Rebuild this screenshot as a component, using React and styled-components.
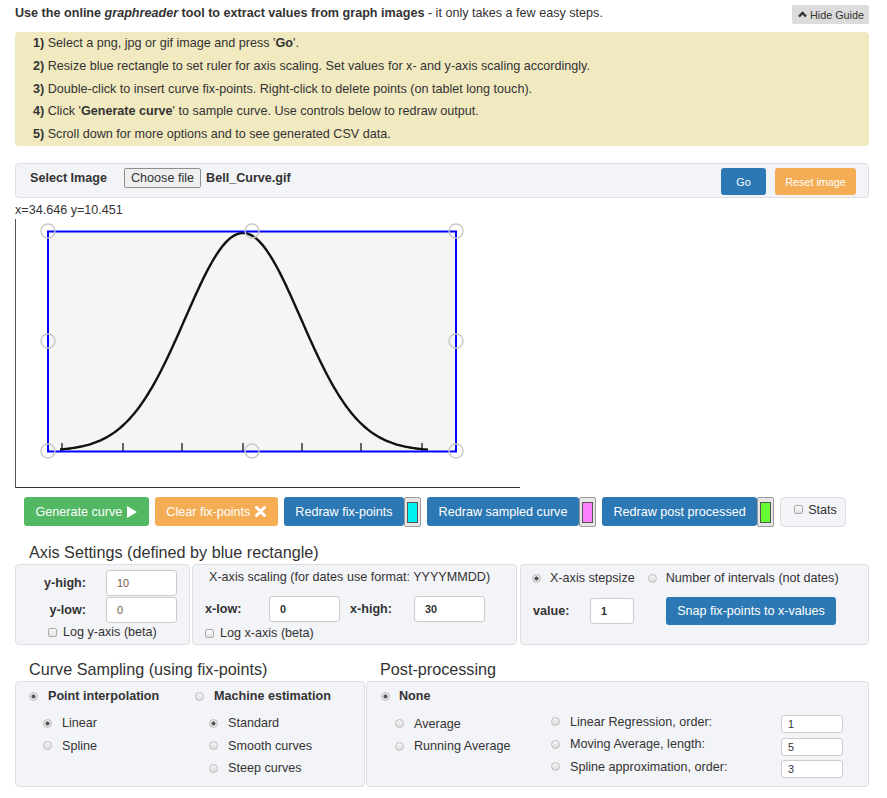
import React from "react";
import styled, { createGlobalStyle } from "styled-components";

const GlobalStyle = createGlobalStyle`
  * { box-sizing: border-box; }
  body {
    margin: 0;
    background: #fff;
    font-family: "Liberation Sans", Arial, sans-serif;
    font-size: 12.6px;
    color: #333;
  }
`;

const COLORS = {
  primary: "#2c78b4",
  success: "#52b863",
  warning: "#f4ad55",
};

const Page = styled.div`
  width: 854px;
  margin-left: 15px;
`;

const Header = styled.div`
  display: flex;
  justify-content: space-between;
  align-items: flex-start;
  height: 28px;
  margin-bottom: 4px;
`;

const Intro = styled.div`
  margin-top: 5px;
  line-height: 16px;
`;

const HideButton = styled.button`
  margin-top: 5px;
  height: 19px;
  padding: 0 5px 0 6px;
  border: none;
  border-radius: 2px;
  background: #dcdcdc;
  color: #333;
  font-family: inherit;
  font-size: 10.8px;
  display: flex;
  align-items: center;
  gap: 3px;
`;

const Guide = styled.div`
  background: #f1e9c0;
  border-radius: 4px;
  padding: 0 0 0 18px;
  height: 114px;
`;

const GuideItem = styled.div`
  line-height: 22.8px;
`;

const Panel = styled.div`
  background: #f3f4f8;
  border: 1px solid #dedfe3;
  border-radius: 4px;
  width: ${(p) => (p.$w ? `${p.$w}px` : "auto")};
`;

const SelectBar = styled(Panel)`
  margin-top: 17px;
  height: 35px;
  display: flex;
  align-items: flex-start;
  justify-content: space-between;
  padding: 4px 12px 0 14px;
`;

const FileGroup = styled.div`
  display: flex;
  align-items: center;
  height: 20px;
`;

const Bold = styled.b`
  font-weight: bold;
`;

const FileLabel = styled.b`
  margin-right: 17px;
`;

const FileButton = styled.span`
  display: inline-flex;
  align-items: center;
  height: 20px;
  padding: 0 6px;
  background: #efefef;
  border: 1px solid #8f8f8f;
  border-radius: 2px;
  margin-right: 5px;
`;

const ButtonGroup = styled.div`
  display: flex;
  gap: 9px;
`;

const Btn = styled.button`
  height: ${(p) => p.$h || 29}px;
  width: ${(p) => (p.$w ? `${p.$w}px` : "auto")};
  padding: 0 ${(p) => (p.$px != null ? p.$px : 11.5)}px;
  border: none;
  border-radius: 3px;
  background: ${(p) => COLORS[p.$variant || "primary"]};
  color: #fff;
  font-family: inherit;
  font-size: ${(p) => p.$fs || 12.6}px;
  display: inline-flex;
  align-items: center;
  justify-content: center;
  gap: 5px;
  flex-shrink: 0;
`;

const Coords = styled.div`
  margin-top: 4px;
  line-height: 17px;
`;

const CanvasFrame = styled.div`
  width: 505px;
  height: 269px;
  border-left: 1px solid #555;
  border-bottom: 1px solid #333;
`;

const ToolRow = styled.div`
  display: flex;
  align-items: flex-start;
  gap: 6px;
  margin-top: 9px;
  padding-left: 9px;
`;

const Pair = styled.div`
  display: flex;
`;

const Swatch = styled.span`
  width: 17px;
  height: 30px;
  background: #e6e6e6;
  border: 1px solid #9a9a9a;
  border-radius: 2px;
  display: flex;
  align-items: center;
  justify-content: center;
`;

const SwatchFill = styled.span`
  width: 11px;
  height: 21px;
  border: 1px solid #555;
  background: ${(p) => p.$color};
`;

const StatsBox = styled(Panel)`
  width: 66px;
  height: 30px;
  display: flex;
  align-items: flex-start;
  gap: 5px;
  padding: 4px 0 0 13px;
  line-height: 16px;
`;

const Check = styled.span`
  display: inline-block;
  width: 9px;
  height: 9px;
  border: 1px solid #aaa;
  border-radius: 2px;
  background: linear-gradient(#fafafa, #e2e2e2);
  flex-shrink: 0;
  margin-top: ${(p) => p.$mt || 0}px;
`;

const Radio = styled.span`
  display: inline-block;
  width: 9px;
  height: 9px;
  border-radius: 50%;
  border: 1px solid #bcbcbc;
  background: ${(p) =>
    p.$checked
      ? "radial-gradient(circle, #555 0 1.8px, #e9e9e9 2.3px)"
      : "linear-gradient(#f6f6f6, #dcdcdc)"};
  flex-shrink: 0;
  margin-right: ${(p) => (p.$mr != null ? p.$mr : 10)}px;
`;

const SectionTitle = styled.h3`
  margin: 0;
  font-size: 16.2px;
  font-weight: normal;
  line-height: 20px;
  padding-left: 14px;
  width: ${(p) => (p.$w ? `${p.$w}px` : "auto")};
`;

const SectionHead = styled.div`
  display: flex;
  margin-top: ${(p) => p.$mt}px;
  margin-bottom: 2px;
`;

const PanelRow = styled.div`
  display: flex;
  gap: ${(p) => p.$gap || 0}px;
`;

const Field = styled.input`
  width: ${(p) => p.$w}px;
  height: ${(p) => p.$h || 26}px;
  border: 1px solid #ccc;
  border-radius: 3px;
  background: #fff;
  padding: 0 ${(p) => (p.$h && p.$h < 20 ? 6 : 10)}px;
  font-family: inherit;
  font-size: 10.8px;
  font-weight: ${(p) => (p.$bold ? "bold" : "normal")};
  color: ${(p) => p.$color || "#333"};
  margin-top: ${(p) => p.$mt || 0}px;
  outline: none;
`;

const YPanel = styled(Panel)`
  height: 81px;
  padding-top: 5px;
`;

const YGrid = styled.div`
  display: grid;
  grid-template-columns: 70px 71px;
  column-gap: 20px;
  row-gap: 1px;
  align-items: center;
`;

const RightLabel = styled.b`
  text-align: right;
`;

const CheckRow = styled.div`
  display: flex;
  align-items: center;
  gap: 6px;
  height: ${(p) => p.$h || 20}px;
  padding-left: ${(p) => p.$pl}px;
  margin-top: ${(p) => p.$mt || 0}px;
`;

const XPanel = styled(Panel)`
  height: 81px;
  padding: 4px 0 0 12px;
`;

const XTitle = styled.div`
  line-height: 16px;
  padding-left: 4px;
`;

const FieldRow = styled.div`
  display: flex;
  align-items: center;
  margin-top: ${(p) => p.$mt || 0}px;
`;

const FieldLabel = styled.b`
  width: ${(p) => p.$w}px;
  flex-shrink: 0;
  padding-left: ${(p) => p.$pl || 0}px;
`;

const StepPanel = styled(Panel)`
  height: 81px;
  padding: 5px 0 0 11px;
`;

const RadioRow = styled.div`
  display: flex;
  align-items: center;
  height: ${(p) => p.$h || 18}px;
  padding-left: ${(p) => p.$pl || 0}px;
  margin-top: ${(p) => p.$mt || 0}px;
`;

const Spacer = styled.span`
  width: ${(p) => p.$w}px;
  flex-shrink: 0;
`;

const SamplingPanel = styled(Panel)`
  height: 106px;
  padding: 5px 0 0 13px;
  display: flex;
`;

const Column = styled.div`
  width: ${(p) => (p.$w ? `${p.$w}px` : "auto")};
  flex-shrink: 0;
`;

const PostPanel = styled(Panel)`
  height: 106px;
  padding: 5px 0 0 14px;
`;

const PostCols = styled.div`
  display: flex;
  margin-top: 7.5px;
`;

const ParamRow = styled.div`
  display: flex;
  justify-content: space-between;
  align-items: flex-start;
  height: 22.5px;
  width: 292px;
`;

const ParamLabel = styled.span`
  display: flex;
  align-items: center;
  line-height: 16px;
  padding-top: 1px;
`;

function bellPath() {
  const pts = [];
  for (let x = 44; x <= 412; x += 2) {
    const d = x - 227;
    const y = 232 - 218 * Math.exp(-(d * d) / (2 * 58 * 58));
    pts.push(`${x},${y.toFixed(2)}`);
  }
  return "M" + pts.join(" L");
}

const HANDLES = [
  [32, 12], [236, 12], [440, 12],
  [32, 122], [440, 122],
  [32, 232], [236, 232], [440, 232],
];
const TICKS = [46, 107, 166, 227, 286, 345, 406];

const GraphImage = () => (
  <svg width="504" height="268" viewBox="0 0 504 268">
    <rect x="32" y="12.5" width="408" height="220" fill="#f5f5f5" />
    {TICKS.map((x) => (
      <line key={x} x1={x} y1="224" x2={x} y2="232" stroke="#333" strokeWidth="1.5" />
    ))}
    <path d={bellPath()} fill="none" stroke="#111" strokeWidth="2.4" />
    <rect x="32" y="12.5" width="408" height="220" fill="none" stroke="#0000ff" strokeWidth="2" />
    {HANDLES.map(([x, y]) => (
      <circle key={`${x}-${y}`} cx={x} cy={y} r="7" fill="none" stroke="#c8c8c8" strokeWidth="1.4" />
    ))}
  </svg>
);

const ChevronUp = () => (
  <svg width="9" height="7" viewBox="0 0 9 7">
    <polyline points="1,5.5 4.5,2 8,5.5" fill="none" stroke="#333" strokeWidth="2.4" />
  </svg>
);

const PlayIcon = () => (
  <svg width="10" height="12" viewBox="0 0 10 12">
    <polygon points="0,0 10,6 0,12" fill="#fff" />
  </svg>
);

const RemoveIcon = () => (
  <svg width="11" height="11" viewBox="0 0 11 11">
    <path d="M1.5 1.5 L9.5 9.5 M9.5 1.5 L1.5 9.5" stroke="#fff" strokeWidth="3" strokeLinecap="round" />
  </svg>
);

const App = () => (
  <Page>
    <GlobalStyle />
    <Header>
      <Intro>
        <b>
          Use the online <i>graphreader</i> tool to extract values from graph images
        </b>{" "}
        - it only takes a few easy steps.
      </Intro>
      <HideButton>
        <ChevronUp />
        Hide Guide
      </HideButton>
    </Header>

    <Guide>
      <GuideItem>
        <b>1)</b> Select a png, jpg or gif image and press '<b>Go</b>'.
      </GuideItem>
      <GuideItem>
        <b>2)</b> Resize blue rectangle to set ruler for axis scaling. Set values for x- and y-axis scaling accordingly.
      </GuideItem>
      <GuideItem>
        <b>3)</b> Double-click to insert curve fix-points. Right-click to delete points (on tablet long touch).
      </GuideItem>
      <GuideItem>
        <b>4)</b> Click '<b>Generate curve</b>' to sample curve. Use controls below to redraw output.
      </GuideItem>
      <GuideItem>
        <b>5)</b> Scroll down for more options and to see generated CSV data.
      </GuideItem>
    </Guide>

    <SelectBar>
      <FileGroup>
        <FileLabel>Select Image</FileLabel>
        <FileButton>Choose file</FileButton>
        <Bold>Bell_Curve.gif</Bold>
      </FileGroup>
      <ButtonGroup>
        <Btn $h={27} $w={45} $fs={10.8} $px={0}>Go</Btn>
        <Btn $h={27} $w={81} $fs={10.8} $px={0} $variant="warning">Reset image</Btn>
      </ButtonGroup>
    </SelectBar>

    <Coords>x=34.646 y=10.451</Coords>
    <CanvasFrame>
      <GraphImage />
    </CanvasFrame>

    <ToolRow>
      <Btn $variant="success">
        Generate curve <PlayIcon />
      </Btn>
      <Btn $variant="warning">
        Clear fix-points <RemoveIcon />
      </Btn>
      <Pair>
        <Btn>Redraw fix-points</Btn>
        <Swatch>
          <SwatchFill $color="#00f0f0" />
        </Swatch>
      </Pair>
      <Pair>
        <Btn>Redraw sampled curve</Btn>
        <Swatch>
          <SwatchFill $color="#ff80ff" />
        </Swatch>
      </Pair>
      <Pair>
        <Btn>Redraw post processed</Btn>
        <Swatch>
          <SwatchFill $color="#66ff33" />
        </Swatch>
      </Pair>
      <StatsBox>
        <Check $mt={3} />
        Stats
      </StatsBox>
    </ToolRow>

    <SectionHead $mt={15}>
      <SectionTitle>Axis Settings (defined by blue rectangle)</SectionTitle>
    </SectionHead>
    <PanelRow>
      <YPanel $w={175}>
        <YGrid>
          <RightLabel>y-high:</RightLabel>
          <Field $w={71} defaultValue="10" $color="#6e5444" />
          <RightLabel>y-low:</RightLabel>
          <Field $w={71} defaultValue="0" $color="#6e5444" />
        </YGrid>
        <CheckRow $pl={32} $h={18}>
          <Check />
          Log y-axis (beta)
        </CheckRow>
      </YPanel>
      <Spacer $w={2} />
      <XPanel $w={325}>
        <XTitle>X-axis scaling (for dates use format: YYYYMMDD)</XTitle>
        <FieldRow $mt={11}>
          <FieldLabel $w={64}>x-low:</FieldLabel>
          <Field $w={71} defaultValue="0" $bold />
          <Spacer $w={10} />
          <FieldLabel $w={64}>x-high:</FieldLabel>
          <Field $w={71} defaultValue="30" $bold />
        </FieldRow>
        <CheckRow $pl={0} $mt={1}>
          <Check />
          Log x-axis (beta)
        </CheckRow>
      </XPanel>
      <Spacer $w={3} />
      <StepPanel $w={349}>
        <RadioRow $h={16}>
          <Radio $checked $mr={9} />
          X-axis stepsize
          <Spacer $w={13} />
          <Radio $mr={9} />
          Number of intervals (not dates)
        </RadioRow>
        <FieldRow $mt={11}>
          <FieldLabel $w={58} $pl={1}>value:</FieldLabel>
          <Field $w={44} defaultValue="1" $bold />
          <Spacer $w={32} />
          <Btn $h={28} $w={170} $px={0}>Snap fix-points to x-values</Btn>
        </FieldRow>
      </StepPanel>
    </PanelRow>

    <SectionHead $mt={14}>
      <SectionTitle $w={351}>Curve Sampling (using fix-points)</SectionTitle>
      <SectionTitle>Post-processing</SectionTitle>
    </SectionHead>
    <PanelRow $gap={1}>
      <SamplingPanel $w={350}>
        <Column $w={166}>
          <RadioRow>
            <Radio $checked />
            <b>Point interpolation</b>
          </RadioRow>
          <RadioRow $pl={14} $mt={6.75} $h={22.5}>
            <Radio $checked />
            Linear
          </RadioRow>
          <RadioRow $pl={14} $h={22.5}>
            <Radio />
            Spline
          </RadioRow>
        </Column>
        <Column>
          <RadioRow>
            <Radio />
            <b>Machine estimation</b>
          </RadioRow>
          <RadioRow $pl={14} $mt={6.75} $h={22.5}>
            <Radio $checked />
            Standard
          </RadioRow>
          <RadioRow $pl={14} $h={22.5}>
            <Radio />
            Smooth curves
          </RadioRow>
          <RadioRow $pl={14} $h={22.5}>
            <Radio />
            Steep curves
          </RadioRow>
        </Column>
      </SamplingPanel>
      <PostPanel $w={503}>
        <RadioRow>
          <Radio $checked $mr={9} />
          <b>None</b>
        </RadioRow>
        <PostCols>
          <Column $w={170}>
            <RadioRow $pl={14} $h={22.5}>
              <Radio />
              Average
            </RadioRow>
            <RadioRow $pl={14} $h={22.5}>
              <Radio />
              Running Average
            </RadioRow>
          </Column>
          <Column>
            <ParamRow>
              <ParamLabel>
                <Radio />
                Linear Regression, order:
              </ParamLabel>
              <Field $w={62} $h={18} $mt={2.5} defaultValue="1" />
            </ParamRow>
            <ParamRow>
              <ParamLabel>
                <Radio />
                Moving Average, length:
              </ParamLabel>
              <Field $w={62} $h={18} $mt={2.5} defaultValue="5" />
            </ParamRow>
            <ParamRow>
              <ParamLabel>
                <Radio />
                Spline approximation, order:
              </ParamLabel>
              <Field $w={62} $h={18} $mt={2.5} defaultValue="3" />
            </ParamRow>
          </Column>
        </PostCols>
      </PostPanel>
    </PanelRow>
  </Page>
);

export default App;
